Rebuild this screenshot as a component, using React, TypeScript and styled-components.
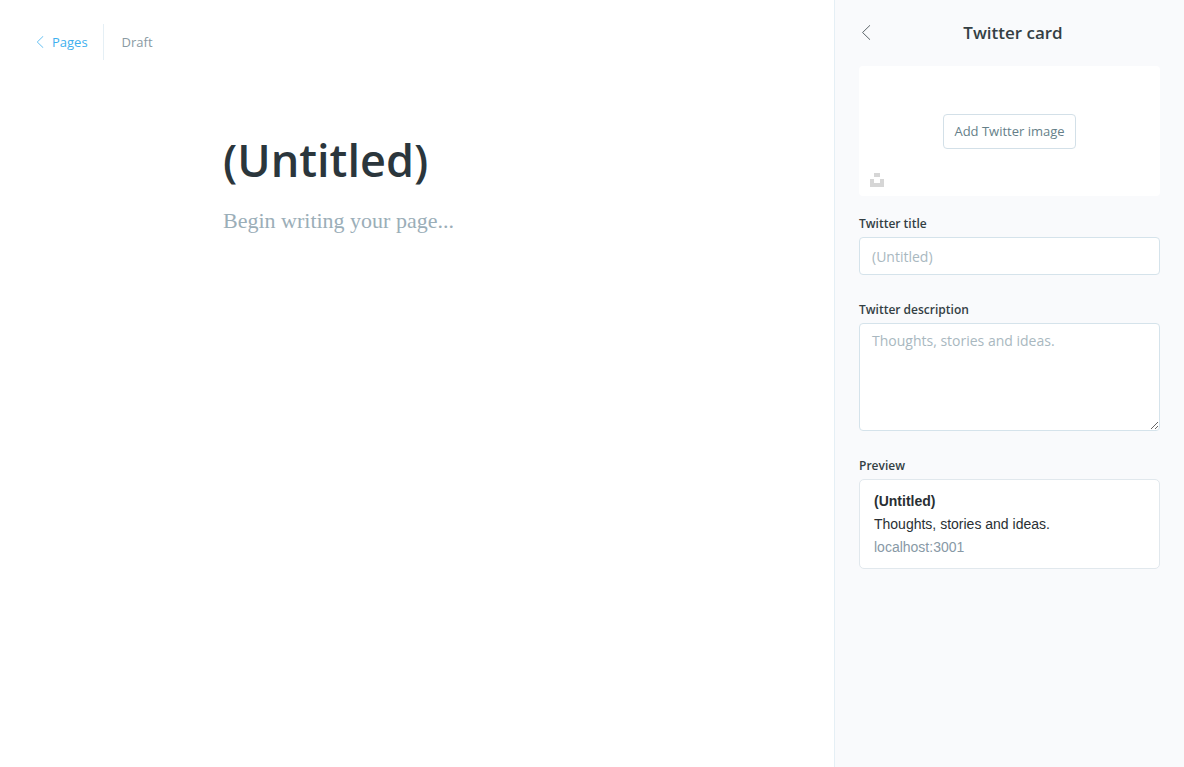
import React from "react";
import styled, { createGlobalStyle } from "styled-components";

const ui = `"Open Sans", "Noto Sans", sans-serif`;

const GlobalStyle = createGlobalStyle`
  *, *::before, *::after { box-sizing: border-box; }
  html, body { margin: 0; background: #fff; }
  body { font-family: ${ui}; color: #343f44; }
  button, input, textarea { font-family: inherit; }
`;

const Page = styled.div`
  display: flex;
  min-height: 100vh;
`;

const Editor = styled.main`
  flex: 1;
  min-width: 0;
  padding: 24px 32px;
`;

const TopBar = styled.header`
  display: flex;
  align-items: center;
  height: 36px;
  font-size: 13px;
  line-height: 18px;
`;

const BackLink = styled.a`
  display: flex;
  align-items: center;
  gap: 8px;
  height: 36px;
  padding: 0 15px 0 4px;
  border-right: 1px solid #e5eff5;
  color: #3eb0ef;
  text-decoration: none;
`;

const Status = styled.span`
  padding-left: 18px;
  color: #8a9aa3;
`;

const Article = styled.article`
  width: 100%;
  max-width: 740px;
  margin: 0 auto;
  padding: 68px 0 0 176px;
`;

const PostTitle = styled.h1`
  margin: 0;
  font-size: 45px;
  line-height: 64px;
  font-weight: 600;
  color: #2b363c;
`;

const Placeholder = styled.p`
  margin: 14px 0 0;
  font-family: Georgia, "Liberation Serif", serif;
  font-size: 22px;
  line-height: 30px;
  color: #9baeb8;
`;

const Sidebar = styled.aside`
  flex: 0 0 350px;
  padding: 18px 24px 24px;
  border-left: 1px solid #e5eff5;
  background: #f9fafc;
`;

const PanelHeader = styled.div`
  display: flex;
  align-items: center;
  height: 30px;
  margin-bottom: 18px;
`;

const IconButton = styled.button`
  display: flex;
  padding: 0 4px 2px 2px;
  border: 0;
  background: none;
  color: #343f44;
  cursor: pointer;
`;

const PanelTitle = styled.h2`
  flex: 1;
  margin: 0;
  padding-right: 9px;
  font-size: 17px;
  line-height: 24px;
  font-weight: 600;
  text-align: center;
`;

const Uploader = styled.div`
  position: relative;
  display: flex;
  align-items: center;
  justify-content: center;
  height: 130px;
  margin-bottom: 20px;
  border-radius: 4px;
  background: #fff;
`;

const UploadButton = styled.button`
  height: 35px;
  padding: 0 10px;
  border: 1px solid #d3e0e8;
  border-radius: 4px;
  background: #fff;
  color: #667f89;
  font-size: 13px;
  line-height: 18px;
  cursor: pointer;
`;

const StockButton = styled.button`
  position: absolute;
  left: 11px;
  bottom: 9px;
  display: flex;
  padding: 0;
  border: 0;
  background: none;
  color: #d6d6d6;
  cursor: pointer;
`;

const Field = styled.div`
  display: flex;
  flex-direction: column;
  gap: 5px;
  margin-bottom: 27px;
`;

const Label = styled.label`
  font-size: 12px;
  line-height: 16px;
  font-weight: 600;
`;

const control = `
  display: block;
  width: 100%;
  margin: 0;
  border: 1px solid #d5e3eb;
  border-radius: 4px;
  background: #fff;
  color: #343f44;
  font-size: 14px;
  line-height: 20px;
  &::placeholder { color: #a9b8c0; opacity: 1; }
`;

const TextInput = styled.input`
  ${control}
  height: 38px;
  padding: 8px 12px;
`;

const TextArea = styled.textarea`
  ${control}
  height: 108px;
  padding: 7px 12px;
  resize: vertical;
`;

const Card = styled.div`
  padding: 10px 14px 9px;
  border: 1px solid #e1e8ed;
  border-radius: 5px;
  background: #fff;
  font-family: "Liberation Sans", Arial, sans-serif;
  font-size: 14px;
  line-height: 23px;
  color: #292f33;
`;

const CardLine = styled.div<{ $bold?: boolean; $muted?: boolean }>`
  font-weight: ${(p) => (p.$bold ? 700 : 400)};
  color: ${(p) => (p.$muted ? "#8899a6" : "inherit")};
`;

const Chevron = ({ width, height }: { width: number; height: number }) => (
  <svg width={width} height={height} viewBox="0 0 8 14" fill="none" stroke="currentColor" strokeWidth="0.8" aria-hidden="true">
    <path d="M7.5.5.8 7l6.7 6.5" vectorEffect="non-scaling-stroke" strokeLinecap="round" strokeLinejoin="round" />
  </svg>
);

export default function App() {
  return (
    <Page>
      <GlobalStyle />
      <Editor>
        <TopBar>
          <BackLink href="#pages">
            <Chevron width={8} height={12} />
            Pages
          </BackLink>
          <Status>Draft</Status>
        </TopBar>
        <Article>
          <PostTitle>(Untitled)</PostTitle>
          <Placeholder>Begin writing your page...</Placeholder>
        </Article>
      </Editor>
      <Sidebar>
        <PanelHeader>
          <IconButton type="button" aria-label="Back">
            <Chevron width={10} height={15} />
          </IconButton>
          <PanelTitle>Twitter card</PanelTitle>
        </PanelHeader>
        <Uploader>
          <UploadButton type="button">Add Twitter image</UploadButton>
          <StockButton type="button" aria-label="Choose a stock photo">
            <svg width="14" height="14" viewBox="0 0 14 14" fill="currentColor" aria-hidden="true">
              <path d="M4 0h6v4H4zM0 6h4v4h6V6h4v8H0z" />
            </svg>
          </StockButton>
        </Uploader>
        <Field>
          <Label htmlFor="twitter-title">Twitter title</Label>
          <TextInput id="twitter-title" type="text" placeholder="(Untitled)" />
        </Field>
        <Field>
          <Label htmlFor="twitter-description">Twitter description</Label>
          <TextArea id="twitter-description" placeholder="Thoughts, stories and ideas." />
        </Field>
        <Field>
          <Label as="span">Preview</Label>
          <Card>
            <CardLine $bold>(Untitled)</CardLine>
            <CardLine>Thoughts, stories and ideas.</CardLine>
            <CardLine $muted>localhost:3001</CardLine>
          </Card>
        </Field>
      </Sidebar>
    </Page>
  );
}
